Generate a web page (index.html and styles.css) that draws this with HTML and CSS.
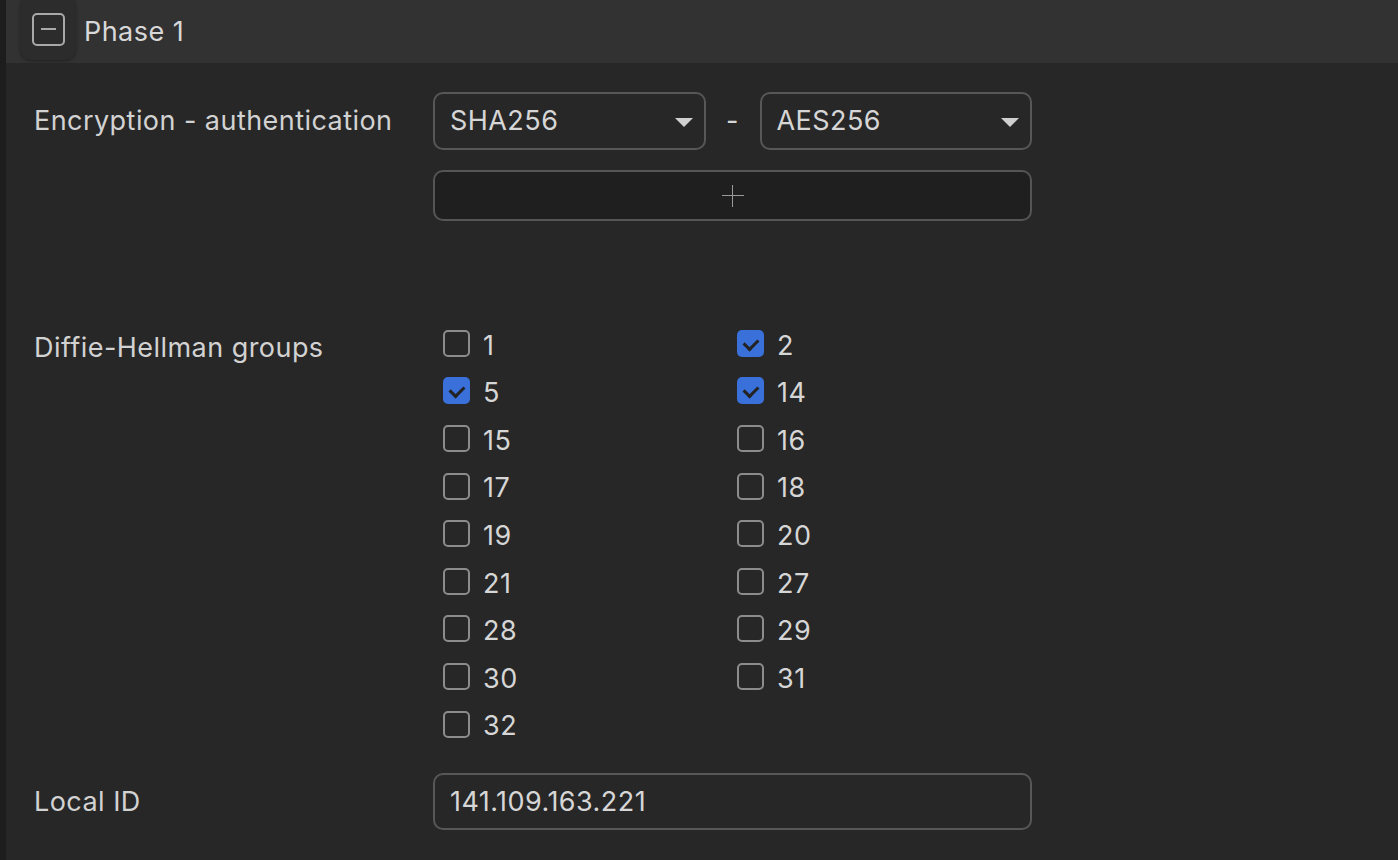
FILE: index.html
```html
<!DOCTYPE html>
<html lang="en">
  <head>
    <meta charset="UTF-8" />
    <title>Phase 1</title>
    <link rel="stylesheet" href="styles.css">
  </head>
  <body>
    <div class="container">
      <!-- 标题栏 -->
      <header class="header">
        <button class="toggle" type="button">
          <span class="toggleIcon"></span>
        </button>
        <h1 class="title">Phase 1</h1>
      </header>

      <!-- 表单 -->
      <main class="main">
        <div class="row">
          <div class="label label-select">Encryption - authentication</div>
          <div class="field">
            <div class="pair">
              <div class="select">SHA256<span class="caret"></span></div>
              <span class="dash">-</span>
              <div class="select">AES256<span class="caret"></span></div>
            </div>
            <button class="addBtn" type="button"><span class="plus"></span></button>
          </div>
        </div>

        <div class="row row-groups">
          <div class="label label-check">Diffie-Hellman groups</div>
          <div class="field">
            <ul class="checks">
              <li><span class="box"></span>1</li>
              <li><span class="box on"></span>2</li>
              <li><span class="box on"></span>5</li>
              <li><span class="box on"></span>14</li>
              <li><span class="box"></span>15</li>
              <li><span class="box"></span>16</li>
              <li><span class="box"></span>17</li>
              <li><span class="box"></span>18</li>
              <li><span class="box"></span>19</li>
              <li><span class="box"></span>20</li>
              <li><span class="box"></span>21</li>
              <li><span class="box"></span>27</li>
              <li><span class="box"></span>28</li>
              <li><span class="box"></span>29</li>
              <li><span class="box"></span>30</li>
              <li><span class="box"></span>31</li>
              <li><span class="box"></span>32</li>
            </ul>
          </div>
        </div>

        <div class="row row-local">
          <div class="label label-select">Local ID</div>
          <div class="field">
            <div class="input">141.109.163.221</div>
          </div>
        </div>
      </main>
    </div>
  </body>
</html>
```

FILE: styles.css
```css
/* 清除默认样式 */
* {
  margin: 0;
  padding: 0;
  box-sizing: border-box;
}
li {
  list-style: none;
}
body {
  background: #272727;
  color: #d6d6d6;
  font: 27px/1.2 Inter, 'Noto Sans', sans-serif;
  letter-spacing: 0.45px;
}

/* 包裹容器 */
.container {
  width: 100vw;
  height: 100vh;
  overflow: hidden;
  border-left: 6px solid #1d1d1d;
}

/* 标题栏 */
.header {
  height: 63px;
  background: #323232;
  padding-left: 14px;

  display: flex;
  align-items: flex-start;
}
.toggle {
  width: 56px;
  height: 64px;
  margin-top: -4px;
  border: none;
  border-radius: 11px;
  background: #2c2c2c;
  box-shadow: 0 1px 3px rgba(0, 0, 0, 0.35);

  display: flex;
  justify-content: center;
  align-items: center;
}
.toggleIcon {
  width: 33px;
  height: 33px;
  margin-top: 2px;
  border: 2px solid #a9a9a9;
  border-radius: 5px;
  position: relative;
}
.toggleIcon::after {
  content: '';
  position: absolute;
  left: 7px;
  right: 7px;
  top: 13px;
  height: 2px;
  background: #a9a9a9;
}
.title {
  font-size: 27px;
  font-weight: 400;
  color: #d8d8d8;
  margin-left: 8px;
  line-height: 63px;
}

/* 表单 */
.main {
  padding: 29px 0 0 28px;
}
.row {
  display: grid;
  grid-template-columns: 399px 599px;
}
.label {
  color: #d2d2d2;
}
.label-select {
  line-height: 58px;
}
.label-check {
  line-height: 47.6px;
  padding-top: 3px;
}
.row-groups {
  margin-top: 100px;
}
.row-local {
  margin-top: 24px;
}

.pair {
  display: flex;
  align-items: center;
}
.select {
  flex: 1;
  height: 58px;
  border: 2px solid #575757;
  border-radius: 10px;
  padding-left: 15px;
  line-height: 54px;
  position: relative;
}
.caret {
  position: absolute;
  right: 11px;
  top: 24px;
  width: 0;
  height: 0;
  border-left: 9px solid transparent;
  border-right: 9px solid transparent;
  border-top: 9px solid #d0d0d0;
}
.dash {
  width: 54px;
  text-align: center;
}
.addBtn {
  margin-top: 20px;
  width: 100%;
  height: 51px;
  background: #1f1f1f;
  border: 2px solid #555;
  border-radius: 10px;

  display: flex;
  justify-content: center;
  align-items: center;
}
.plus {
  width: 22px;
  height: 22px;
  position: relative;
}
.plus::before,
.plus::after {
  content: '';
  position: absolute;
  background: #9a9a9a;
}
.plus::before {
  left: 0;
  right: 0;
  top: 10px;
  height: 1.5px;
}
.plus::after {
  top: 0;
  bottom: 0;
  left: 10px;
  width: 1.5px;
}

/* 复选框 */
.checks {
  display: grid;
  grid-template-columns: 294px 1fr;
  padding-left: 10px;
}
.checks li {
  height: 47.6px;
  display: flex;
  align-items: center;
  gap: 13px;
  padding-top: 2px;
}
.box {
  width: 27px;
  height: 27px;
  border: 2px solid #8c8c8c;
  border-radius: 5px;
  margin-top: -5px;
}
.box.on {
  border: none;
  background: #3a70d9;
  position: relative;
}
.box.on::after {
  content: '';
  position: absolute;
  left: 9px;
  top: 6px;
  width: 7px;
  height: 11px;
  border: solid #232323;
  border-width: 0 3px 3px 0;
  transform: rotate(45deg);
}

.input {
  height: 57px;
  border: 2px solid #575757;
  border-radius: 10px;
  padding-left: 15px;
  line-height: 53px;
}
```
